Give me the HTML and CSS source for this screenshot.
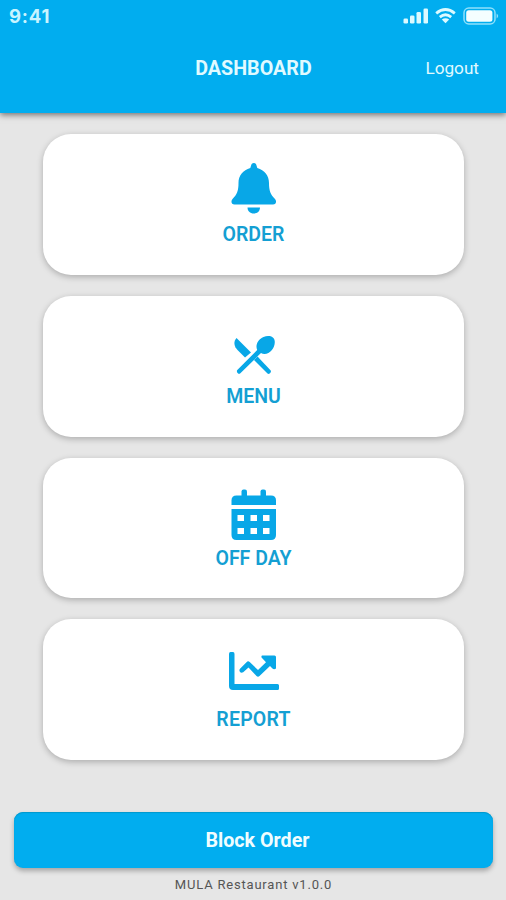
FILE: index.html
```html
<!DOCTYPE html>
<html lang="en">
<head>
<meta charset="utf-8">
<title>Dashboard</title>
<link rel="stylesheet" href="styles.css">
</head>
<body>
<div class="screen">
  <header class="header">
    <div class="status">
      <span class="time">9:41</span>
      <svg class="status-icons" viewBox="400 4 100 24" fill="#dcfaff">
        <rect x="403.5" y="18.5" width="4.5" height="5" rx="1.3"/>
        <rect x="410" y="15.5" width="4.5" height="8" rx="1.3"/>
        <rect x="416.5" y="12" width="4.5" height="11.5" rx="1.3"/>
        <rect x="423.5" y="8.5" width="4.5" height="15" rx="1.3"/>
        <g fill="none" stroke="#dcfaff" stroke-width="2.8">
          <path d="M436.2 13.4Q445.5 5.7 454.8 13.4"/>
          <path d="M439.8 17.1Q445.5 12.5 451.2 17.1"/>
        </g>
        <path d="M441.8 19.5Q445.5 17 449.2 19.5L445.5 23.2Z"/>
        <rect x="464" y="8" width="31" height="16" rx="4.8" fill="none" stroke="#8fe0fb" stroke-width="1.5"/>
        <rect x="466.2" y="10.2" width="26.2" height="11.6" rx="2.5" fill="#f4feff"/>
        <path d="M496.6 13.5Q499.8 16 496.6 18.5Z" fill="#8fe0fb"/>
      </svg>
    </div>
    <div class="bar">
      <h1 class="title">DASHBOARD</h1>
      <a class="logout">Logout</a>
    </div>
  </header>
  <main class="cards">
    <a class="card">
      <svg class="icon" viewBox="223.5 156.5 60 60">
        <path d="M253.3 162.5C251.8 162.5 250.7 163.7 250.5 165.2L249.8 167.5C242.5 169.5 238 175 238 182.5C238 190 236.5 194 232 198.5C230 201 231 204 234 204H272.5C275.5 204 276.5 201 274.5 198.5C270 194 268.5 190 268.5 182.5C268.5 175 264 169.5 256.8 167.5L256.1 165.2C255.9 163.7 254.8 162.5 253.3 162.5Z"/>
        <path d="M247 207H259.5C259.5 210.5 257 213 253.3 213C249.5 213 247 210.5 247 207Z"/>
      </svg>
      <span class="label">ORDER</span>
    </a>
    <a class="card">
      <svg class="icon" viewBox="223.5 318 60 60">
        <path d="M236 338L250.5 352.5L244.5 357.5L237 350C233.5 346.5 232.7 341.5 236 338Z"/>
        <path d="M236.8 370L256.7 350C254.5 345 257.5 339.5 263 337C268.5 334.8 274.3 336.5 274.3 342C274.3 348 269.5 354 264 354C262.6 354 261.5 353.6 260.5 353L239.6 373.5C238 374.7 235.3 371.7 236.8 370Z"/>
        <path d="M257 356.500L270 370.300C271.500 372.200 268.700 374.900 267 373.500L253.500 360Z"/>
      </svg>
      <span class="label">MENU</span>
    </a>
    <a class="card">
      <svg class="icon" viewBox="223.5 480 60 60">
        <path d="M241 496V491.500Q241 489.500 243 489.500H244.500Q246.500 489.500 246.500 491.500V496Z"/>
        <path d="M260 496V491.500Q260 489.500 262 489.500H263.500Q265.500 489.500 265.500 491.500V496Z"/>
        <path d="M236 495.500H270.500Q275.500 495.500 275.500 500.500V505H231V500.500Q231 495.500 236 495.500Z"/>
        <path fill-rule="evenodd" d="M231 509H275.500V535Q275.500 540 270.500 540H236Q231 540 231 535ZM237 515V521H243.500V515ZM250 515V521H256.500V515ZM262.500 515V521H269V515ZM237 528V534H243.500V528ZM250 528V534H256.500V528ZM262.500 528V534H269V528Z"/>
      </svg>
      <span class="label">OFF DAY</span>
    </a>
    <a class="card">
      <svg class="icon" viewBox="223.5 641.5 60 60">
        <path d="M228.500 653.500Q228.500 651.500 230 651.500H232.500Q234 651.500 234 653.500V683.500H277Q278.500 683.500 278.500 685V688Q278.500 689.500 277 689.500H232.500Q228.500 689.500 228.500 685.500Z"/>
        <path d="M261.500 655H274Q275.500 655 275.500 656.500V668Q273.500 669.500 272 668L269.500 665.500L259 675.500Q257.500 677 256 675.500L248 667L242.700 671.800Q240.500 673 239.200 671Q238.500 669.500 239.500 668.300L246 661.700Q247.500 660 249.200 661.500L257.500 669.500L265.500 661.700L261.500 657.500Q260.300 656 261.500 655Z"/>
      </svg>
      <span class="label report">REPORT</span>
    </a>
  </main>
  <footer class="footer">
    <button class="block">Block Order</button>
    <p class="version">MULA Restaurant v1.0.0</p>
  </footer>
</div>
</body>
</html>
```
FILE: styles.css
```css
* { box-sizing: border-box; }
body { margin: 0; font-family: Roboto, "Liberation Sans", sans-serif; }
.screen { width: 506px; height: 900px; background: #e6e6e6; display: flex; flex-direction: column; overflow: hidden; }
.header { height: 113px; flex: none; background: #01adef; color: #e0faff; box-shadow: 0 2px 6px rgba(0,0,0,.5); }
.status { height: 32px; display: flex; justify-content: space-between; padding: 4px 6px 0 9px; }
.time { font: 700 18.5px/25px Inter, sans-serif; letter-spacing: .8px; color: #c9f4ff; }
.status-icons { width: 100px; height: 24px; }
.bar { height: 72px; display: grid; grid-template-columns: 1fr auto 1fr; align-items: center; padding: 0 27px 0 28px; }
.title { margin: 0; padding-top: 2px; grid-column: 2; font-size: 19.7px; line-height: 24px; font-weight: 700; }
.logout { justify-self: end; font-size: 17.2px; line-height: 24px; font-weight: 400; }
.cards { display: flex; flex-direction: column; gap: 21px; padding: 21.3px 42px 0 43px; }
.card { height: 140.700px; border-radius: 28px; background: #fff; box-shadow: 0 2px 6px rgba(0,0,0,.25); display: flex; flex-direction: column; align-items: center; padding-top: 22.4px; }
.icon { width: 60px; height: 60px; fill: #08a7e7; flex: none; }
.label { margin-top: 6.6px; font-size: 19.5px; line-height: 24px; font-weight: 600; color: #149fd3; white-space: nowrap; }
.report { letter-spacing: .2px; }
.footer { margin-top: auto; height: 88px; padding: 0 13px 0 14px; }
.block { display: block; width: 100%; height: 56px; border: 0; border-radius: 9px; background: #01adef; color: #f0fdff; font: 700 19.7px/24px Roboto, sans-serif; padding: 2px 0 0 8px; box-shadow: 0 3px 5px rgba(0,0,0,.28), inset 0 1px 1px #0098cc; }
.version { margin: 8px 0 0; font-size: 13px; line-height: 18px; color: #555; text-align: center; letter-spacing: .8px; }
```
